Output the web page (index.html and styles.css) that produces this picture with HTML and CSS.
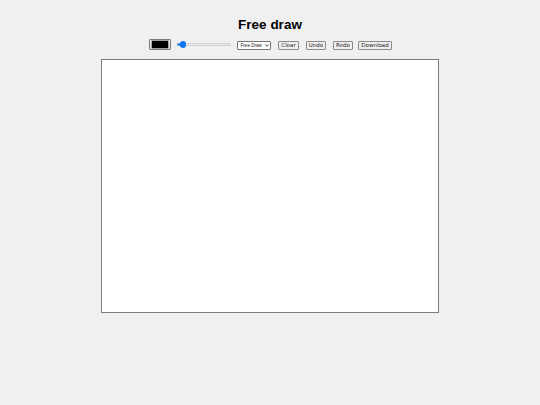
FILE: index.html
```html
<!DOCTYPE html>
<html>
<head>
<meta charset="utf-8">
<title>Free draw</title>
<link rel="stylesheet" href="styles.css">
</head>
<body>
  <h1 class="title">Free draw</h1>
  <div class="toolbar">
    <div class="color"><div class="swatch"></div></div>
    <input class="size" type="range" min="1" max="50" value="4">
    <div class="mode">
      <span class="mode-text">Free Draw</span>
      <svg class="chev" width="4" height="3" viewBox="0 0 4 3"><path d="M0.4 0.5 L2 2.3 L3.6 0.5" fill="none" stroke="#222" stroke-width="0.8"/></svg>
    </div>
    <button class="btn btn-clear">Clear</button>
    <button class="btn btn-undo">Undo</button>
    <button class="btn btn-redo">Redo</button>
    <button class="btn btn-download">Download</button>
  </div>
  <div class="canvas"></div>
</body>
</html>
```
FILE: styles.css
```css
html, body {
  margin: 0;
  padding: 0;
  background: #f0f0f0;
}
body {
  font-family: "Liberation Sans", Arial, sans-serif;
}
.title {
  margin: 17px 0 6px;
  font-size: 13.5px;
  line-height: 16px;
  font-weight: bold;
  text-align: center;
  color: #000;
}
.toolbar {
  display: flex;
  justify-content: center;
  align-items: center;
  gap: 6px;
  height: 11px;
  margin: 0 0 9px 0;
  padding-left: 1px;
}
.color {
  box-sizing: border-box;
  width: 22px;
  height: 11px;
  padding: 1px 2px;
  border: 1px solid #7a7a7a;
  border-radius: 1px;
  background: #efefef;
}
.swatch {
  width: 100%;
  height: 100%;
  background: #000;
  box-shadow: 0 0 0 0.5px #555;
}
.size {
  -webkit-appearance: none;
  appearance: none;
  width: 54px;
  height: 6px;
  margin: 0;
  padding: 0;
  background: transparent;
}
.size::-webkit-slider-runnable-track {
  height: 3px;
  border-radius: 2px;
  background: linear-gradient(to right, #0b75f5 0 7px, #e9e9e9 7px 100%);
  box-shadow: inset 0 0 0 0.5px #bdbdbd;
}
.size::-webkit-slider-thumb {
  -webkit-appearance: none;
  appearance: none;
  width: 6.5px;
  height: 6.5px;
  margin-top: -1.75px;
  border-radius: 50%;
  background: #0b75f5;
  border: none;
}
.mode {
  box-sizing: border-box;
  display: flex;
  align-items: center;
  width: 34px;
  height: 9px;
  padding: 0 1.5px 0 2.5px;
  margin-top: 2px;
  border: 0.6px solid #767676;
  border-radius: 1px;
  background: #fff;
  font-family: "Liberation Sans", Arial, sans-serif;
  font-size: 4.6px;
  color: #222;
  white-space: nowrap;
}
.chev {
  display: block;
  margin-left: auto;
}
.btn {
  box-sizing: border-box;
  height: 9px;
  margin: 2px 0 0 0;
  padding: 0;
  border: 0.6px solid #8a8a8a;
  border-radius: 1px;
  background: #efefef;
  font-family: "DejaVu Sans", sans-serif;
  font-size: 5.5px;
  line-height: 7px;
  color: #222;
  text-align: center;
}
.btn-clear { width: 21px; margin-left: 1px; }
.btn-undo { width: 20px; margin-left: 1px; }
.btn-redo { width: 20px; margin-left: 1px; }
.btn-download { width: 34px; margin-left: -1px; }
.canvas {
  box-sizing: border-box;
  width: 338px;
  height: 254px;
  margin: 0 auto;
  background: #fff;
  border: 1px solid #7c7c7c;
}
```
